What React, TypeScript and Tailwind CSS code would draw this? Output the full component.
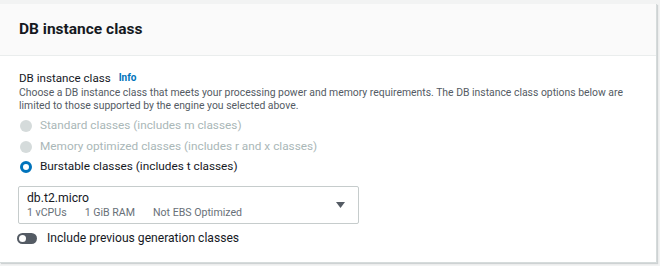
function Radio({ label, checked, disabled }: { label: string, checked?: boolean, disabled?: boolean }) {
  return (
    <div className="flex items-center h-[20.5px] gap-[8px] pl-[1px]">
      {checked ? (
        <span className="w-[12px] h-[12px] rounded-full border-[3.5px] border-[#0073bb] bg-white" />
      ) : (
        <span className="w-[12px] h-[12px] rounded-full bg-[#d5dbdb]" />
      )}
      <span className={disabled ? "text-[#aab7b8]" : "text-[#16191f]"}>{label}</span>
    </div>
  )
}

export default function App() {
  return (
    <div className="w-[660px] h-[266px] bg-[#f2f3f3] pt-[4px] font-['Roboto',sans-serif] text-[11.8px]">
      <div className="w-[657px] h-[259px] bg-white border-r border-b border-[#d5dbdb] shadow-[1px_1px_1px_rgba(0,28,36,0.15)]">
        <div className="h-[52px] bg-[#fafafa] border-b border-[#eaeded] flex items-center px-[19px]">
          <h2 className="text-[15.5px] font-bold text-[#16191f]">DB instance class</h2>
        </div>
        <div className="px-[19px] pt-[15px]">
          <div className="flex items-center gap-[8px] text-[11.6px] text-[#16191f] leading-[14px]">
            DB instance class
            <span className="text-[10px] font-bold text-[#0073bb]">Info</span>
          </div>
          <p className="text-[10.4px] text-[#545b64] leading-[13px] mt-[1px] w-[615px]">
            Choose a DB instance class that meets your processing power and memory requirements. The DB instance class options below are limited to those supported by the engine you selected above.
          </p>
          <div className="mt-[4px]">
            <Radio label="Standard classes (includes m classes)" disabled />
            <Radio label="Memory optimized classes (includes r and x classes)" disabled />
            <Radio label="Burstable classes (includes t classes)" checked />
          </div>
          <div className="mt-[8.75px] -ml-[1px] w-[341px] h-[38px] border border-[#c6cccc] rounded-[2px] flex items-center justify-between pl-[8px] pr-[13px]">
            <div className="flex flex-col">
              <span className="text-[12.2px] text-[#16191f] leading-[15px]">db.t2.micro</span>
              <div className="flex gap-[18px] text-[10.6px] text-[#687078] leading-[13px]">
                <span>1 vCPUs</span>
                <span>1 GiB RAM</span>
                <span>Not EBS Optimized</span>
              </div>
            </div>
            <svg width="9" height="6" viewBox="0 0 9 6"><path d="M0 0h9L4.5 6z" fill="#545b64" /></svg>
          </div>
          <div className="flex items-center gap-[10px] mt-[7px] h-[14px] -ml-[2px] text-[12.1px] text-[#16191f]">
            <span className="w-[20px] h-[11px] rounded-full bg-[#545b64] flex items-center pl-[2px]">
              <span className="w-[7px] h-[7px] rounded-full bg-white" />
            </span>
            Include previous generation classes
          </div>
        </div>
      </div>
    </div>
  )
}
